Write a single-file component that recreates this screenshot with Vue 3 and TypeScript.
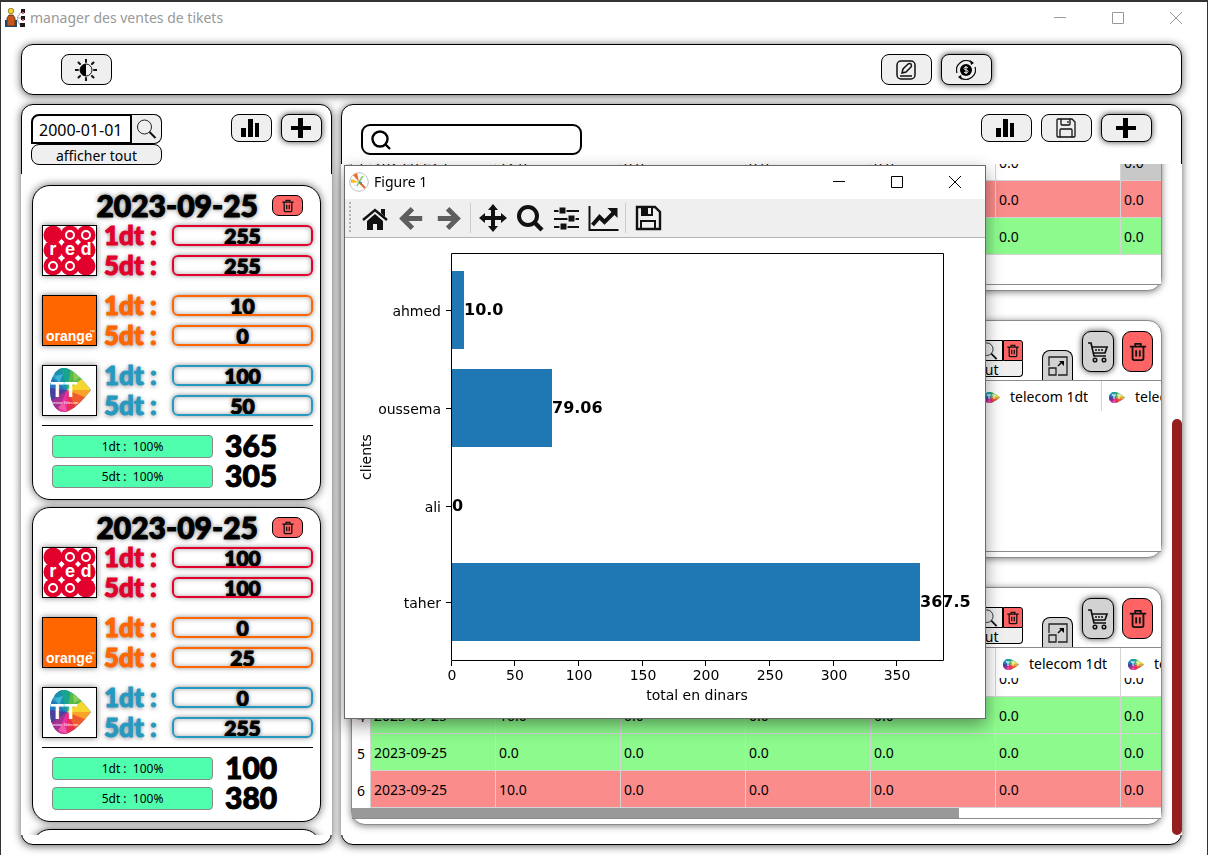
<script setup lang="ts">
import { onMounted, ref } from 'vue'

interface Carrier { id: string; one: string; five: string }
interface DayCard { date: string; carriers: Carrier[]; totalOne: string; totalFive: string }
interface Row { n: string; date: string; values: string[]; tone: string; selected?: number }
interface Client { id: string; header: boolean; rows: Row[]; scrollbar: boolean }

const days: DayCard[] = [
  {
    date: '2023-09-25',
    carriers: [
      { id: 'red', one: '255', five: '255' },
      { id: 'orange', one: '10', five: '0' },
      { id: 'telecom', one: '100', five: '50' },
    ],
    totalOne: '365',
    totalFive: '305',
  },
  {
    date: '2023-09-25',
    carriers: [
      { id: 'red', one: '100', five: '100' },
      { id: 'orange', one: '0', five: '25' },
      { id: 'telecom', one: '0', five: '255' },
    ],
    totalOne: '100',
    totalFive: '380',
  },
]

const row = (n: string, first: string, tone: string, selected?: number): Row => ({
  n,
  date: '2023-09-25',
  values: [first, '0.0', '0.0', '0.0', '0.0', '0.0'],
  tone,
  selected,
})

const clients: Client[] = [
  { id: 'a', header: false, scrollbar: false, rows: [row('1', '12.0', 'plain', 5), row('2', '0.0', 'bad'), row('3', '0.0', 'good')] },
  { id: 'b', header: true, scrollbar: false, rows: [] },
  { id: 'c', header: true, scrollbar: true, rows: [row('3', '0.0', 'plain'), row('4', '10.0', 'good'), row('5', '0.0', 'good'), row('6', '10.0', 'bad')] },
]

const columns = ['', '', '', '', '', 'telecom 1dt', 'telecom 5dt']

const bars = [
  { name: 'ahmed', value: 10, label: '10.0', y: 33 },
  { name: 'oussema', value: 79.06, label: '79.06', y: 131 },
  { name: 'ali', value: 0, label: '0', y: 229 },
  { name: 'taher', value: 367.5, label: '367.5', y: 325 },
]
const ticks = [0, 50, 100, 150, 200, 250, 300, 350]
const scale = (v: number): number => 107 + Math.floor(v * 1.274)

const views = ref<HTMLElement[]>([])
const search = ref('')
const date = ref('2000-01-01')

onMounted(() => {
  views.value.forEach((el) => { el.scrollTop = el.scrollHeight })
})
</script>

<template>
  <div class="window">
    <svg class="sprite" aria-hidden="true">
      <defs>
        <clipPath id="leaf-clip">
          <path d="M14 0C5 0 0 11 0 22s5 22 14 22c8 0 20-13 27-22C34 13 22 0 14 0z" />
        </clipPath>
      </defs>
      <symbol id="leaf" viewBox="0 0 41 44" preserveAspectRatio="none">
        <g clip-path="url(#leaf-clip)">
          <rect width="41" height="44" fill="#2b9fc4" />
          <path d="M17 22L0 0h13z" fill="#1c8fae" />
          <path d="M17 22L11 0h12z" fill="#17a58d" />
          <path d="M17 22L21 0h20v10z" fill="#58b947" />
          <path d="M17 22L36 8l5 14z" fill="#f7d531" />
          <path d="M17 22h24l-6 10z" fill="#f9a32b" />
          <path d="M17 22l20 8-12 14z" fill="#ef5a2f" />
          <path d="M17 22l11 22H15z" fill="#ea2f4c" />
          <path d="M17 22v22H5z" fill="#ee2f9c" />
          <path d="M17 22L7 44H0V30z" fill="#a5308f" />
          <path d="M17 22L0 34V18z" fill="#4d3f9f" />
          <path d="M17 22L0 20V7z" fill="#2676bb" />
          <path d="M23 4l8 5-7 4z" fill="#8ccc5a" />
          <path d="M5 8l8-2-4 9z" fill="#3fb6d4" />
          <path d="M8 40l6-7 3 11z" fill="#f05ba8" />
        </g>
      </symbol>
      <symbol id="bars" viewBox="0 0 20 20">
        <path d="M0 10h5v9H0zM7 1h5v18H7zM14 5h4v14h-4z" />
      </symbol>
      <symbol id="plus" viewBox="0 0 20 20"><path d="M7 0h5v8h8v4h-8v8H7v-8H0V8h7z" /></symbol>
      <symbol id="lens" viewBox="0 0 20 20">
        <circle cx="7.500" cy="8" r="7" fill="none" stroke="#222" stroke-width="1" />
        <path d="M12.500 13l6 6" stroke="#111" stroke-width="2" fill="none" />
      </symbol>
      <symbol id="trash" viewBox="0 0 20 22">
        <path d="M1 5h18M7 5V2h6v3M4 5v13q0 2 2 2h8q2 0 2-2V5M8 9v7M12 9v7" fill="none" stroke="#111" stroke-width="2" />
      </symbol>
      <symbol id="cart" viewBox="0 0 22 22">
        <path d="M1 2h3l3 13h12M5 6h15l-2 6H6" fill="none" stroke="#111" stroke-width="1.700" />
        <path d="M9 8v2M12 8v2M15 8v2" stroke="#111" stroke-width="1.500" />
        <circle cx="8" cy="19" r="1.800" fill="none" stroke="#111" stroke-width="1.500" />
        <circle cx="17" cy="19" r="1.800" fill="none" stroke="#111" stroke-width="1.500" />
      </symbol>
      <symbol id="expand" viewBox="0 0 20 20">
        <path d="M1 10V1h18v18h-9M1 12h7v7H1z" fill="none" stroke="#222" stroke-width="1.300" />
        <path d="M10 10l4-4" fill="none" stroke="#111" stroke-width="1.600" /><path d="M11 5h5v5z" />
      </symbol>
      <symbol id="floppy" viewBox="0 0 20 20">
        <path d="M1 2q0-1 1-1h14l3 3v14q0 1-1 1H2q-1 0-1-1zM5 1v5q0 1 1 1h7q1 0 1-1V1M4 19v-7q0-1 1-1h10q1 0 1 1v7M12 3v2" fill="none" stroke="#111" stroke-width="1.300" />
      </symbol>
    </svg>

    <header class="titlebar">
      <svg class="app-icon" viewBox="0 0 20 20" aria-hidden="true">
        <circle cx="6" cy="3" r="2.800" fill="#f5d02c" stroke="#5a4a00" stroke-width=".6" />
        <path d="M4 7h4l2 3v8H2v-8z" fill="#c4571c" stroke="#5c2a10" stroke-width=".8" />
        <path d="M0 12h2v7H0zM10 12h2v7h-2zM2 18h8v1H2z" fill="#1b4a70" />
        <path d="M16 1h4v4h-4zM16 8h4v4h-4zM15 15h5v4h-5z" fill="#20171c" />
        <path d="M17 4h2v2h-2zM17 11h2v2h-2z" fill="#d7647c" />
        <path d="M12 10l4-6M12 10h4M12 11l3 6" stroke="#8a8a8a" fill="none" stroke-width=".8" />
      </svg>
      <span class="title">manager des ventes de tikets</span>
      <div class="caption">
        <button type="button" aria-label="Réduire"><svg viewBox="0 0 12 12"><path d="M0 5.500h12" /></svg></button>
        <button type="button" aria-label="Agrandir"><svg viewBox="0 0 12 12"><path d="M.5.5h11v11H.5z" /></svg></button>
        <button type="button" aria-label="Fermer"><svg viewBox="0 0 12 12"><path d="M0 0l12 12M12 0L0 12" /></svg></button>
      </div>
    </header>

    <div class="content">
      <nav class="topbar panel">
        <button class="btn wide" type="button" aria-label="Thème">
          <svg class="i22" viewBox="0 0 22 22">
            <circle cx="11" cy="11" r="6" fill="none" stroke="#111" stroke-width="1" />
            <path d="M11 5a6 6 0 0 0 0 12z" />
            <path d="M11 0v3M11 19v3M0 11h3M19 11h3M3.500 3.500l1.500 1.500M17 17l1.500 1.500M3.500 18.500L5 17M17 5l1.500-1.500" stroke="#111" stroke-width="2" stroke-linecap="round" />
          </svg>
        </button>
        <span class="grow"></span>
        <button class="btn wide" type="button" aria-label="Modifier">
          <svg class="i20" viewBox="0 0 20 20" fill="none" stroke="#111" stroke-width="1.500">
            <rect x="1" y="1" width="18" height="18" rx="4" />
            <path d="M6 13l1-4 5-5q2-1 3 0 1 2 0 3l-5 5zM4 16h12" />
          </svg>
        </button>
        <button class="btn wide lit" type="button" aria-label="Caisse">
          <svg class="i20" viewBox="0 0 20 20">
            <circle cx="10" cy="10" r="6" />
            <path d="M12 8q-1-1-2-1-2 0-2 1.500 0 1 2 1.500 2 0 2 1.500 0 1.500-2 1.500-1 0-2-1M10 6v8" fill="none" stroke="#efefef" stroke-width="1" />
            <path d="M1 13A9.500 9.500 0 0 1 15 2M19 7A9.500 9.500 0 0 1 5 18" fill="none" stroke="#111" stroke-width="1.300" />
            <path d="M14 0l4 3-3 2zM6 20l-4-3 3-2z" />
          </svg>
        </button>
      </nav>

      <div class="columns">
        <section class="panel left">
          <div class="left-head">
            <div class="filter">
              <div class="filter-row">
                <input v-model="date" class="date" type="text" aria-label="Date">
                <button class="mini lens-btn" type="button" aria-label="Chercher"><svg class="i20"><use href="#lens" /></svg></button>
              </div>
              <button class="mini all" type="button">afficher tout</button>
            </div>
            <span class="grow"></span>
            <button class="btn slim" type="button" aria-label="Statistiques"><svg class="i20"><use href="#bars" /></svg></button>
            <button class="btn slim lit" type="button" aria-label="Ajouter"><svg class="i20"><use href="#plus" /></svg></button>
          </div>

          <div class="left-scroll">
            <article v-for="(day, d) in days" :key="d" class="day">
              <div class="day-head">
                <h2>{{ day.date }}</h2>
                <button class="del" type="button" aria-label="Supprimer"><svg class="i14"><use href="#trash" /></svg></button>
              </div>
              <div v-for="c in day.carriers" :key="c.id" class="carrier" :class="c.id">
                <svg v-if="c.id === 'red'" class="logo" viewBox="0 0 53 49">
                  <rect width="53" height="49" fill="#fff" />
                  <g fill="#e2002d">
                    <circle cx="10" cy="9" r="9.500" /><circle cx="27" cy="9" r="9.500" /><circle cx="43" cy="9" r="9.500" />
                    <circle cx="10" cy="24" r="9.500" /><circle cx="27" cy="24" r="9.500" /><circle cx="43" cy="24" r="9.500" />
                    <circle cx="10" cy="40" r="9.500" /><circle cx="27" cy="40" r="9.500" /><circle cx="43" cy="40" r="9.500" />
                  </g>
                  <path fill="#fff" d="M18.500 13l3 3-3 3-3-3zM35 13l3 3-3 3-3-3zM18.500 29l3 3-3 3-3-3zM35 29l3 3-3 3-3-3z" />
                  <g fill="none" stroke="#fff" stroke-width="2">
                    <circle cx="27" cy="9" r="4" /><circle cx="43" cy="9" r="4" />
                    <circle cx="10" cy="40" r="4" /><circle cx="27" cy="40" r="4" />
                  </g>
                  <text class="red-text" x="10" y="29">r</text>
                  <text class="red-text" x="27" y="29">e</text>
                  <text class="red-text" x="43" y="29">d</text>
                </svg>
                <svg v-else-if="c.id === 'orange'" class="logo" viewBox="0 0 53 49">
                  <rect width="53" height="49" fill="#ff6600" />
                  <text class="orange-text" x="3" y="45">orange</text>
                  <text class="tm" x="46" y="38">™</text>
                </svg>
                <svg v-else class="logo" viewBox="0 0 53 49">
                  <rect width="53" height="49" fill="#fff" />
                  <use href="#leaf" x="7" y="2" width="41" height="44" />
                  <text class="tt" x="21" y="31">TT</text>
                  <text class="tt-sub" x="21" y="38">Tunisie Telecom</text>
                </svg>
                <div class="lines">
                  <label class="line"><span>1dt :</span><input type="text" readonly :value="c.one"></label>
                  <label class="line"><span>5dt :</span><input type="text" readonly :value="c.five"></label>
                </div>
              </div>
              <div class="totals">
                <div class="total"><div class="gauge" role="progressbar" aria-valuenow="100">1dt :&nbsp; 100%</div><strong>{{ day.totalOne }}</strong></div>
                <div class="total"><div class="gauge" role="progressbar" aria-valuenow="100">5dt :&nbsp; 100%</div><strong>{{ day.totalFive }}</strong></div>
              </div>
            </article>
            <article class="day"></article>
          </div>
        </section>

        <section class="panel right">
          <div class="right-head">
            <label class="search">
              <svg class="i20" viewBox="0 0 20 20" fill="none" stroke="#000" stroke-width="2.400"><circle cx="9" cy="9" r="7.500" /><path d="M14 14l5 5" /></svg>
              <input v-model="search" type="text" aria-label="Recherche">
            </label>
            <span class="grow"></span>
            <button class="btn medium" type="button" aria-label="Statistiques"><svg class="i20"><use href="#bars" /></svg></button>
            <button class="btn medium" type="button" aria-label="Enregistrer"><svg class="i20"><use href="#floppy" /></svg></button>
            <button class="btn medium lit" type="button" aria-label="Ajouter"><svg class="i20"><use href="#plus" /></svg></button>
          </div>

          <div class="right-scroll">
            <div class="clients">
              <article v-for="client in clients" :key="client.id" class="client">
                <div class="client-head">
                  <template v-if="client.header">
                    <div class="client-filter">
                      <div class="client-filter-row">
                        <button class="mini lens-btn" type="button" aria-label="Chercher"><svg class="i18"><use href="#lens" /></svg></button>
                        <button class="mini clear" type="button" aria-label="Effacer"><svg class="i14"><use href="#trash" /></svg></button>
                      </div>
                      <button class="mini show-all" type="button">afficher tout</button>
                    </div>
                    <button class="tab" type="button" aria-label="Agrandir"><svg class="i20"><use href="#expand" /></svg></button>
                    <button class="tall lit" type="button" aria-label="Acheter"><svg class="i22"><use href="#cart" /></svg></button>
                    <button class="tall danger" type="button" aria-label="Supprimer"><svg class="i20"><use href="#trash" /></svg></button>
                  </template>
                </div>
                <div class="table-frame">
                  <div ref="views" class="table-view">
                    <table>
                      <thead>
                        <tr>
                          <th v-if="client.rows.length" class="num"></th>
                          <th v-for="(c, i) in columns" :key="i">
                            <span v-if="c" class="th"><svg class="leaf"><use href="#leaf" /><path d="M3 3h4M5 3v4M8 3h4M10 3v4" stroke="#fff" fill="none" /></svg>{{ c }}</span>
                          </th>
                        </tr>
                      </thead>
                      <tbody>
                        <tr v-for="r in client.rows" :key="r.n" :class="r.tone">
                          <th class="num" scope="row">{{ r.n }}</th>
                          <td>{{ r.date }}</td>
                          <td v-for="(v, i) in r.values" :key="i" :class="{ selected: r.selected === i }">{{ v }}</td>
                        </tr>
                      </tbody>
                    </table>
                  </div>
                  <div v-if="client.scrollbar" class="hbar"><div class="hthumb"></div></div>
                </div>
              </article>
            </div>
            <div class="vthumb"></div>
          </div>
        </section>
      </div>
    </div>

    <section class="figure" aria-label="Figure 1">
      <header class="figure-title">
        <svg class="i20" viewBox="0 0 20 20" aria-hidden="true">
          <circle cx="10" cy="10" r="9.300" fill="#fff" stroke="#b9c2c6" stroke-width="1" />
          <circle cx="10" cy="10" r="5.500" fill="none" stroke="#dde2e4" stroke-width=".6" />
          <path d="M10 10L4 3l4-2z" fill="#f26a2a" /><path d="M10 10L2 11V7z" fill="#fbb71c" />
          <path d="M10 10l6 6" stroke="#e8622b" stroke-width="2" /><path d="M10 10l4-6M10 10l-2 4" stroke="#86d06a" stroke-width="1.600" />
          <path d="M10 10l3 1" stroke="#3c8fb5" stroke-width="1.500" />
        </svg>
        <span>Figure 1</span>
        <div class="caption dark">
          <button type="button" aria-label="Réduire"><svg viewBox="0 0 12 12"><path d="M0 5.500h12" /></svg></button>
          <button type="button" aria-label="Agrandir"><svg viewBox="0 0 12 12"><path d="M.5.5h11v11H.5z" /></svg></button>
          <button type="button" aria-label="Fermer"><svg viewBox="0 0 12 12"><path d="M0 0l12 12M12 0L0 12" /></svg></button>
        </div>
      </header>
      <div class="figure-tools">
        <span class="grip"></span>
        <button type="button" aria-label="Accueil"><svg viewBox="0 0 28 28"><path d="M14 10l8 7v9h-6v-6h-4v6H6v-9z" /><path d="M2 16L14 6l12 10" fill="none" stroke="#111" stroke-width="2.400" /><path d="M20 5h4v8l-4-4z" /></svg></button>
        <button class="dim" type="button" aria-label="Précédent"><svg viewBox="0 0 28 28"><path d="M26 14H5M15 3L4 14l11 11" fill="none" stroke="#5e5e5e" stroke-width="5.500" /></svg></button>
        <button class="dim" type="button" aria-label="Suivant"><svg viewBox="0 0 28 28"><path d="M2 14h21M13 3l11 11-11 11" fill="none" stroke="#5e5e5e" stroke-width="5.500" /></svg></button>
        <span class="sep"></span>
        <button type="button" aria-label="Déplacer"><svg viewBox="0 0 28 28"><path d="M14 0l5 6h-3v6h6V9l6 5-6 5v-3h-6v6h3l-5 6-5-6h3v-6H6v3l-6-5 6-5v3h6V6H9z" /></svg></button>
        <button type="button" aria-label="Zoom"><svg viewBox="0 0 28 28"><circle cx="12" cy="12" r="9" fill="none" stroke="#111" stroke-width="4" /><path d="M18 18l8 8" stroke="#111" stroke-width="4.500" /></svg></button>
        <button type="button" aria-label="Marges"><svg viewBox="0 0 28 28"><path d="M1 7h25M1 15h25M1 23h25" stroke="#111" stroke-width="2" /><path d="M6 3h7v7H6zM15 11h7v7h-7zM7 19h7v7H7z" stroke="#efefef" stroke-width="1" /></svg></button>
        <button type="button" aria-label="Axes"><svg class="axes-icon" viewBox="0 0 30 28"><path d="M1 2v24h29" fill="none" stroke="#111" stroke-width="2" /><path d="M4 21l7-8 5 5 9-9" fill="none" stroke="#111" stroke-width="4" /><path d="M19 4h10v10z" /></svg></button>
        <span class="sep"></span>
        <button type="button" aria-label="Enregistrer"><svg viewBox="0 0 28 28"><path d="M3 3h18l5 5v17H3z" fill="none" stroke="#111" stroke-width="2.400" /><path d="M7 3h12v9H7z" /><path d="M14 4h3v6h-3z" fill="#efefef" /><path d="M7 25v-8h14v8" fill="none" stroke="#111" stroke-width="2" /></svg></button>
      </div>
      <svg class="chart" viewBox="0 0 640 480" role="img" aria-label="total en dinars">
        <g v-for="b in bars" :key="b.name">
          <rect x="107" :y="b.y" :width="scale(b.value) - 107" height="78" fill="#1f77b4" />
          <path :d="`M101 ${b.y + 39}.5h5`" class="stroke" />
          <text class="tick" x="96" :y="b.y + 45" text-anchor="end">{{ b.name }}</text>
          <text class="value" :x="scale(b.value)" :y="b.y + 44">{{ b.label }}</text>
        </g>
        <path class="stroke" d="M106.500 15.500h492v407h-492z" />
        <g v-for="t in ticks" :key="t">
          <path :d="`M${scale(t) - 1}.5 423v5`" class="stroke" />
          <text class="tick" :x="scale(t)" y="442" text-anchor="middle">{{ t }}</text>
        </g>
        <text class="tick" x="352" y="462" text-anchor="middle">total en dinars</text>
        <text class="tick" transform="translate(26 219) rotate(-90)" text-anchor="middle">clients</text>
      </svg>
    </section>
  </div>
</template>

<style>
body { background: #fff; }
</style>

<style scoped>
* { box-sizing: border-box; }
button, input { font: inherit; color: inherit; margin: 0; padding: 0; }
button { display: flex; align-items: center; justify-content: center; flex-shrink: 0; }
svg { display: block; flex-shrink: 0; }

.window {
  position: relative;
  display: flex;
  flex-direction: column;
  height: 100vh;
  overflow: hidden;
  background: #fff;
  border: solid #333;
  border-width: 2px 1px 0;
  font: 14px/20px "Noto Sans", "Open Sans", sans-serif;
  color: #000;
}
.sprite { position: absolute; width: 0; height: 0; }
.grow { flex: 1; }
.i14 { width: 14px; height: 14px; }
.i18 { width: 18px; height: 18px; }
.i20 { width: 20px; height: 20px; }
.i22 { width: 22px; height: 22px; }

.titlebar { display: flex; align-items: center; height: 32px; padding-left: 4px; color: #999; }
.app-icon { width: 20px; height: 20px; }
.title { margin-left: 5px; }
.caption { display: flex; margin-left: auto; }
.caption button { width: 58px; height: 32px; border: 0; background: none; }
.caption svg { width: 12px; height: 12px; fill: none; stroke: #999; stroke-width: 1; }
.caption.dark svg { stroke: #000; }
.titlebar .caption { padding-right: 2px; }

.content { flex: 1; min-height: 0; display: flex; flex-direction: column; gap: 9px; padding: 10px 25px 10px 20px; }
.panel { background: #fff; border: 1px solid #000; border-radius: 12px; box-shadow: 0 1px 8px rgba(0, 0, 0, .65); }
.topbar { display: flex; align-items: center; gap: 9px; height: 51px; flex-shrink: 0; padding: 0 189px 0 39px; }
.btn { border: 1px solid #000; border-radius: 8px; background: #efefef; }
.wide { width: 51px; height: 31px; padding-right: 1px; }
.medium { width: 51px; height: 28px; padding-right: 1px; }
.slim { width: 41px; height: 28px; padding-right: 1px; }
.lit { box-shadow: 0 0 6px rgba(0, 0, 0, .75); }

.columns { flex: 1; min-height: 0; display: flex; gap: 9px; }
.left { width: 311px; flex-shrink: 0; display: flex; flex-direction: column; padding-bottom: 9px; }
.left-head { display: flex; align-items: flex-start; gap: 9px; height: 69px; flex-shrink: 0; padding: 9px 9px 0; }
.filter { width: 131px; }
.filter-row { display: flex; height: 30px; }
.mini { border: 1px solid #000; background: #efefef; }
.date { flex: 1; min-width: 0; border: 2px solid #000; border-radius: 8px 0 0 0; padding: 1px 0 0 6px; font-size: 16px; background: #fff; }
.lens-btn { width: 30px; border-left: 0; border-radius: 0 8px 8px 0; }
.all { width: 100%; height: 21px; padding-top: 2px; border-radius: 8px; }

.left-scroll { flex: 1; min-height: 0; overflow: hidden; display: flex; flex-direction: column; gap: 7px; margin: 0 -1px; padding: 11px 11px 0; background: #fff; }
.day { flex-shrink: 0; min-height: 120px; border: 1px solid #000; border-radius: 18px; padding: 9px 7px 11px 9px; background: #fff; box-shadow: 0 0 9px rgba(0, 0, 0, .6); }
.day-head { display: flex; align-items: flex-start; justify-content: flex-end; gap: 14px; height: 30px; padding-right: 10px; }
h2, strong { margin: 0; font: 900 30px/20px Lato, "Inter", sans-serif; -webkit-text-stroke: 1px #000; }
h2 { text-shadow: 0 0 5px rgba(0, 0, 0, .7); }
.del { width: 31px; height: 21px; border: 1px solid #000; border-radius: 7px; background: #ff6464; }
.carrier { display: flex; gap: 7px; margin-bottom: 19px; }
.red { color: #e2002d; }
.orange { color: #ff6600; }
.telecom { color: #2799c0; margin-bottom: 0; }
.logo { width: 55px; height: 51px; border: 1px solid #000; box-shadow: 0 0 6px rgba(0, 0, 0, .5); }
.red-text { font: 700 17px Inter, sans-serif; fill: #fff; text-anchor: middle; }
.orange-text { font: 700 14px "Liberation Sans", sans-serif; fill: #fff; }
.tm { font: 6px "Liberation Sans", sans-serif; fill: #fff; }
.tt { font: 700 22px "Liberation Sans", sans-serif; fill: #fff; text-anchor: middle; }
.tt-sub { font: 4px "Liberation Sans", sans-serif; fill: #fff; text-anchor: middle; }
.lines { flex: 1; display: flex; flex-direction: column; gap: 9px; }
.line { display: flex; align-items: center; justify-content: space-between; height: 21px; font: 900 26px/21px Lato, "Inter", sans-serif; text-shadow: 0 1px 5px rgba(0, 0, 0, .55); -webkit-text-stroke: 1px; }
.line input { width: 141px; height: 21px; border: 2px solid; border-radius: 6px; background: transparent; box-shadow: 0 0 5px rgba(0, 0, 0, .45), inset 0 0 5px rgba(0, 0, 0, .35); text-align: center; font-size: 21px; line-height: 17px; -webkit-text-fill-color: #000; -webkit-text-stroke: 1px #000; text-shadow: 0 0 4px rgba(0, 0, 0, .7); }
.totals { display: flex; flex-direction: column; gap: 7px; margin-top: 9px; padding: 9px 0 0 10px; border-top: 1px solid #000; }
.total { display: flex; align-items: flex-start; gap: 12px; height: 23px; }
.gauge { width: 161px; height: 23px; border: 1px solid #888; border-radius: 4px; background: #4fffae; font-size: 12px; line-height: 22px; text-align: center; white-space: pre; }

.right { flex: 1; min-width: 0; display: flex; flex-direction: column; padding-bottom: 9px; }
.right-head { display: flex; align-items: flex-start; gap: 9px; height: 59px; flex-shrink: 0; padding: 9px 29px 0 19px; }
.search { display: flex; align-items: center; width: 221px; height: 31px; margin-top: 10px; padding: 0 8px; border: 2px solid #000; border-radius: 9px; }
.search input { flex: 1; min-width: 0; border: 0; outline: 0; background: none; }
.right-scroll { flex: 1; min-height: 0; overflow: hidden; display: flex; justify-content: space-between; gap: 10px; margin: 0 -1px; padding-left: 10px; background: #fff; }
.clients { flex: 1; min-width: 0; display: flex; flex-direction: column; justify-content: flex-end; gap: 29px; padding-bottom: 10px; }
.vthumb { align-self: flex-end; width: 10px; height: 62%; border-radius: 5px; background: #951f1f; }
.client { flex-shrink: 0; border: 1px solid #8c8c8c; border-radius: 14px; padding-bottom: 5px; background: #fff; box-shadow: 0 1px 7px rgba(0, 0, 0, .5); }
.client-head { display: flex; align-items: flex-start; justify-content: flex-end; height: 59px; padding: 10px 8px 0; }
.client-filter { width: 130px; margin: 9px 19px 0 0; }
.client-filter-row { display: flex; justify-content: flex-end; height: 21px; }
.client .lens-btn { border-radius: 0; width: 28px; }
.clear { width: 20px; border-radius: 0 3px 0 0; background: #ff6464; }
.show-all { width: 100%; height: 16px; padding-top: 2px; border-top: 0; border-radius: 0 0 4px 4px; }
.tab { width: 31px; height: 30px; margin: 19px 9px 0 0; border: 1px solid #000; border-bottom: 0; border-radius: 8px 8px 0 0; background: #d2d2d2; }
.tall { width: 32px; height: 41px; border: 1px solid #000; border-radius: 9px; background: #d2d2d2; }
.danger { width: 31px; margin-left: 8px; background: #ff6464; }
.table-frame { display: flex; flex-direction: column; height: 172px; overflow: hidden; border: solid #8c8c8c; border-width: 1px 0; background: #fff; }
.table-view { flex: 1; min-height: 0; overflow: hidden; }
table { width: 100px; table-layout: fixed; border-collapse: separate; border-spacing: 0; }
th, td { width: 125px; min-width: 125px; height: 37px; padding: 2px 3px 0; border: solid #d4d4d4; border-width: 0 1px 1px 0; font-weight: 400; text-align: left; }
thead th { position: sticky; top: 0; height: 30px; border-bottom: 0; background: #fff; }
.num { width: 19px; min-width: 19px; padding: 3px 0 0; text-align: center; background: #fff; }
tbody .num { border-bottom: 0; }
.th { display: flex; align-items: center; gap: 10px; padding-left: 4px; white-space: nowrap; }
.leaf { width: 16px; height: 11px; }
.good td { background: #8cfa8c; }
.bad td { background: #fa8c8c; }
td.selected { background: #c8c8c8; }
.hbar { height: 10px; background: #fff; }
.hthumb { width: 75%; height: 10px; background: #999; }

.figure { position: absolute; left: 343px; top: 163px; width: 642px; border: 1px solid #6b6b6b; background: #fff; box-shadow: 0 6px 16px rgba(0, 0, 0, .4); }
.figure-title { display: flex; align-items: center; gap: 5px; height: 33px; padding: 0 0 2px 4px; }
.figure-title .caption { padding-right: 1px; }
.figure-tools { display: flex; align-items: center; height: 39px; background: #efefef; border-bottom: 1px solid #b4b4b4; }
.figure-tools button { width: 37px; height: 36px; border: 0; background: none; }
.figure-tools svg { width: 28px; height: 28px; fill: #111; }
.figure-tools .dim svg { width: 25px; height: 25px; }
.figure-tools .axes-icon { width: 31px; }
.grip { width: 2px; height: 32px; margin: 0 5px 0 4px; background: repeating-linear-gradient(#b4b4b4 0 2px, transparent 2px 4px); }
.sep { width: 1px; height: 30px; margin: 0 3px; background: #ccc; }
.chart { width: 100%; height: auto; }
.stroke { fill: none; stroke: #000; stroke-width: 1; }
.tick { font: 14px "DejaVu Sans", sans-serif; }
.value { font: 700 16px "DejaVu Sans", sans-serif; }
</style>
